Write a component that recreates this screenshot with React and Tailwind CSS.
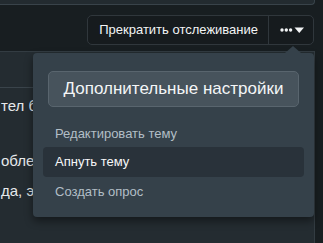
export default function App() {
  const font = { fontFamily: '"Liberation Sans", Arial, sans-serif' };
  return (
    <div className="relative w-[323px] h-[243px] overflow-hidden bg-[#181e21]" style={font}>
      {/* top box remnant */}
      <div className="w-[315px] h-[5px] bg-[#232b30] border-b border-r border-[#39434a] rounded-br-[4px]" />
      {/* action buttons */}
      <div className="flex justify-end pr-[9px] mt-[10px]">
        <div className="flex h-[30px] border border-[#30373c] rounded-[5px] bg-[#161b1e]">
          <div className="flex items-center pl-[11px] pr-[10px] text-[13px] text-[#f2f4f5] border-r border-[#30373c]">
            Прекратить отслеживание
          </div>
          <div className="flex items-center pl-[11px] pr-[9px]">
            <svg width="24" height="8" viewBox="0 0 24 8">
              <circle cx="2" cy="4" r="1.7" fill="#f2f4f5" />
              <circle cx="6.3" cy="4" r="1.7" fill="#f2f4f5" />
              <circle cx="10.6" cy="4" r="1.7" fill="#f2f4f5" />
              <path d="M14.5 1.5h9.5L19.25 7z" fill="#f2f4f5" />
            </svg>
          </div>
        </div>
      </div>
      {/* post panel */}
      <div className="mt-[6px] w-[315px] h-[200px] bg-[#242c31] border-t border-r border-[#333c42]">
        <div className="h-[36px] border-b border-[#3a444b]" />
        <div className="text-[15px] text-[#e6e9eb] pl-[1px] whitespace-nowrap">
          <div className="mt-[8px] leading-[20px]">тел бы</div>
          <div className="mt-[35px] leading-[20px]">облем</div>
          <div className="mt-[10px] leading-[20px]">да, эт</div>
        </div>
      </div>
      {/* dropdown */}
      <div className="absolute left-[33px] top-[53px] w-[281px] h-[164px] bg-[#35414a] rounded-[4px] shadow-[0_4px_8px_rgba(0,0,0,0.45)]">
        <div className="absolute right-[13px] -top-[7px] w-0 h-0 border-l-[8px] border-r-[8px] border-b-[7px] border-l-transparent border-r-transparent border-b-[#35414a]" />
        <div className="px-[15px] pt-[18px]">
          <div className="flex items-center justify-center h-[36px] bg-[#47535c] border border-[#59656e] rounded-[5px] text-[17px] text-[#f4f6f7]">
            Дополнительные настройки
          </div>
        </div>
        <div className="px-[10px] mt-[14px] text-[13px]">
          <div className="h-[25px] flex items-center px-[12px] text-[#b2bec6]">Редактировать тему</div>
          <div className="h-[30px] mt-[1px] flex items-center px-[12px] text-[#f7f8f9] bg-[#29323a] rounded-[4px]">Апнуть тему</div>
          <div className="h-[30px] flex items-center px-[12px] text-[#b2bec6]">Создать опрос</div>
        </div>
      </div>
    </div>
  );
}
